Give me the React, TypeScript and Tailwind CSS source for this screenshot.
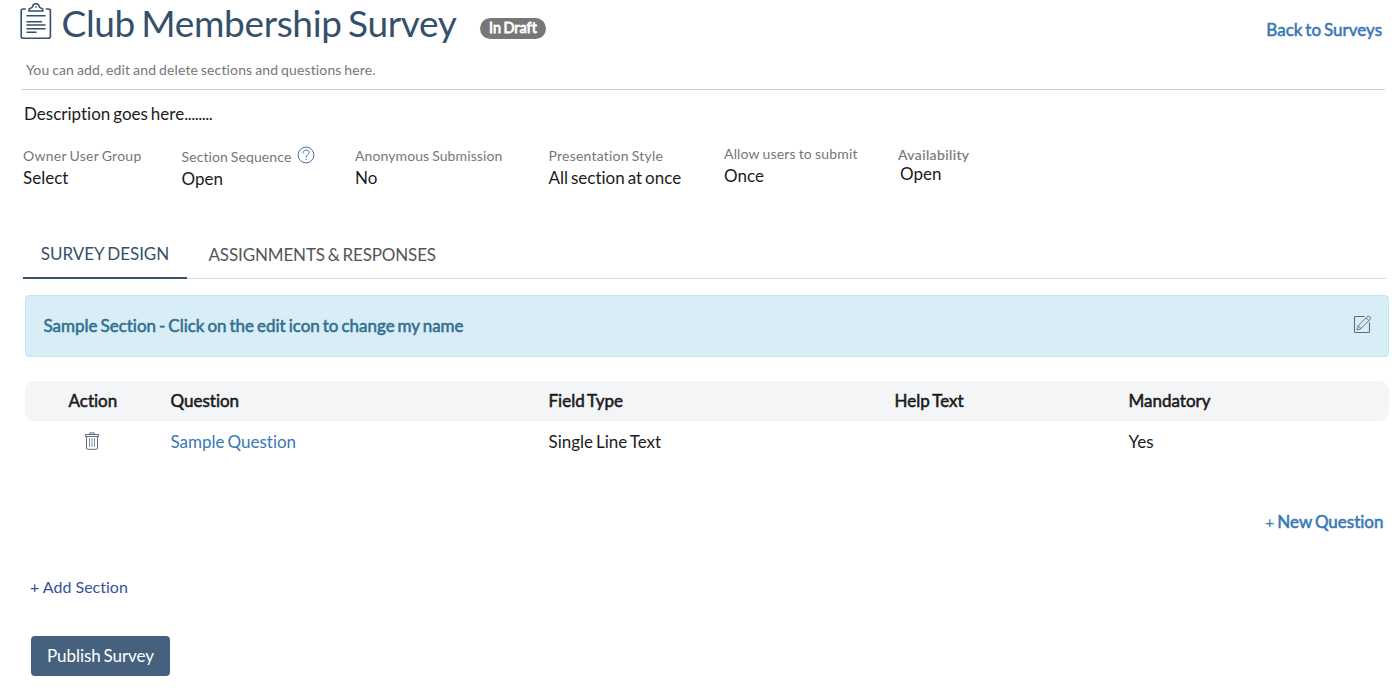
import React from "react";

type FieldProps = {
  label: string;
  value: string;
  className: string;
  labelClass?: string;
  valueClass?: string;
  help?: boolean;
};

function ClipboardIcon() {
  return (
    <svg className="h-[38px] w-8 shrink-0" viewBox="0 0 32 38" fill="none" stroke="#35506b" strokeWidth="1.6" strokeLinecap="round" strokeLinejoin="round">
      <path d="M5.200 7H3.200Q1.200 7 1.200 9v25.200q0 2 2 2h25.200q2 0 2-2V9q0-2-2-2h-2" />
      <path d="M8.900 9V8q0-1.700 2-2 1.500-.3 1.800-1.600Q13.300 1.800 15.900 1.800T19.100 4.400q.3 1.300 1.800 1.600 2 .3 2 2v1z" />
      <path d="M15.600 5h.6" strokeWidth="1.4" />
      <path d="M7 13.700h18M7 19.700h14.500M7 23h18M7 26.700h18M7 30.300h9" strokeWidth="1.5" />
    </svg>
  );
}

function HelpIcon() {
  return (
    <svg className="h-[18px] w-[18px] shrink-0" viewBox="0 0 18 18" fill="none" stroke="#4672ab" strokeWidth="1">
      <circle cx="9" cy="9" r="7.9" />
      <path d="M6 7.200c0-4 6.100-4.200 6.100-.7 0 2.300-3 2.300-3 4.900" strokeLinecap="round" />
      <path d="M8.500 13.500h1.200" strokeWidth="1.2" />
    </svg>
  );
}

function EditIcon() {
  return (
    <svg className="h-[19px] w-[19px] shrink-0" viewBox="0 0 19 19" fill="none" stroke="#596c87" strokeWidth="1.1" strokeLinejoin="round">
      <path d="M11.500 1.500H2.300q-.8 0-.8.8v14.400q0 .8.800.8h13.400q.8 0 .8-.8V7.500" />
      <path d="M4 15l1-4.200 9.200-9.200q1.200-1.100 2.600.2 1.300 1.400.2 2.600l-9 9.200zM5 10.800l3 2.800M13 2.800l3 2.800" strokeWidth="0.95" />
    </svg>
  );
}

function TrashIcon() {
  return (
    <svg className="h-[18px] w-[14px]" viewBox="0 0 14 18" fill="none" stroke="#5d6d83" strokeWidth="1">
      <path d="M.5 4.500v-2h13v2zM4.800 2.500v-1.600h4.400v1.600M1.500 4.500v11.500q0 1.300 1.200 1.300h8.600q1.200 0 1.200-1.300V4.500" />
      <path d="M4.500 6v9M7 6v9M9.500 6v9" stroke="#8295b3" />
    </svg>
  );
}

function Field({ label, value, className, labelClass = "", valueClass = "", help = false }: FieldProps) {
  return (
    <div className={`shrink-0 ${className}`}>
      <div className={`flex h-5 items-center text-[14px] leading-5 text-[#777] [word-spacing:-0.8px] ${labelClass || "tracking-[0.1px]"}`}>
        <span>{label}</span>
        {help && <span className="-mt-1 ml-[5.5px]"><HelpIcon /></span>}
      </div>
      <div className={`text-[17px] text-[#1b1b1b] ${valueClass || "leading-[23px]"}`}>{value}</div>
    </div>
  );
}

const strong = "[-webkit-text-stroke:0.55px_currentColor]";

export default function App() {
  return (
    <main className="h-[688px] w-[1395px] overflow-hidden whitespace-nowrap bg-white font-['Lato',sans-serif] text-[17px] leading-5 text-[#1b1b1b] [font-variant-ligatures:none] [word-spacing:-1.4px]">
      <header className="ml-[22px] mr-[10px] h-[90px] border-b border-[#c9c9c9]">
        <div className="-ml-[2px] -mr-[8px] flex h-[60px] items-start">
          <div className="mt-[2px]"><ClipboardIcon /></div>
          <h1 className="ml-[9.5px] w-[395px] text-[37px] leading-[46px] tracking-[-0.34px] text-[#35506b] [word-spacing:-2.7px]">Club Membership Survey</h1>
          <span className="ml-[23.5px] mt-[18px] flex h-[21px] w-[66px] items-center justify-center rounded-full bg-[#777] pb-px text-[14.5px] text-white [-webkit-text-stroke:0.8px_currentColor]">In Draft</span>
          <a className={`ml-auto mr-[11px] mt-5 text-[#3878b6] ${strong}`}>Back to Surveys</a>
        </div>
        <p className="ml-1 text-[14px] leading-5 tracking-[0.14px] text-[#777] [word-spacing:-0.9px]">You can add, edit and delete sections and questions here.</p>
      </header>

      <p className="ml-6 mt-[14px] h-5">Description goes here<span className="tracking-[-0.5px]">........</span></p>

      <section className="ml-[23px] mt-[22px] flex h-[88px] items-start">
        <Field label="Owner User Group" value="Select" className="w-[158.5px]" labelClass="tracking-[0.25px]" />
        <Field label="Section Sequence" value="Open" className="mt-px w-[173.5px]" help />
        <Field label="Anonymous Submission" value="No" className="w-[193.5px]" />
        <Field label="Presentation Style" value="All section at once" className="w-[175.5px]" labelClass="tracking-[0.22px]" />
        <Field label="Allow users to submit" value="Once" className="-mt-[2px] w-[174px]" labelClass="tracking-[0.18px]" />
        <Field label="Availability" value="Open" className="-mt-px w-[90px]" labelClass="tracking-[0.4px] [-webkit-text-stroke:0.2px_currentColor]" valueClass="ml-[2px] leading-[18px]" />
      </section>

      <nav className="ml-[23px] mr-[9px] flex h-[45px] items-end border-b border-[#dbdbdb] text-[#555]">
        <div className="-mb-px flex h-[46px] w-[164px] justify-center border-b-2 border-[#35506b] pt-[11px] tracking-[-0.05px] text-[#35506b] [word-spacing:-0.8px]">SURVEY DESIGN</div>
        <div className="ml-[21.5px] h-[33px] tracking-[-0.14px]">ASSIGNMENTS &amp; RESPONSES</div>
      </nav>

      <section className="ml-[25px] mr-[6px] mt-4 flex h-[62px] items-center justify-between rounded border border-[#bce8f1] bg-[#d9edf7] pl-[17.5px] pr-4 text-[#31708f]">
        <h2 className={strong}>Sample Section - Click on the edit icon to change my name</h2>
        <div className="-mt-[3px]"><EditIcon /></div>
      </section>

      <section className="ml-[25px] mr-[6px] mt-6">
        <div className={`grid h-10 grid-cols-[145.5px_378px_346px_234px_1fr] items-center rounded-[9px] bg-[#f4f5f7] ${strong}`}>
          <span className="pl-[43.5px]">Action</span>
          <span>Question</span>
          <span>Field Type</span>
          <span>Help Text</span>
          <span>Mandatory</span>
        </div>
        <div className="grid h-[42px] grid-cols-[145.5px_378px_346px_234px_1fr] items-center">
          <span className="-mt-[3px] pl-[60px]"><TrashIcon /></span>
          <a className="text-[#3878b6]">Sample Question</a>
          <span>Single Line Text</span>
          <span />
          <span>Yes</span>
        </div>
      </section>

      <div className="mr-[11.5px] mt-[49px] flex h-5 items-center justify-end text-[#3878b6]">
        <span className="mr-[3px] text-[16px]">+</span>
        <a className={strong}>New Question</a>
      </div>
      <a className="ml-[30px] mt-[45px] block h-5 text-[16px] text-[#34539b] [word-spacing:0px]">+ Add Section</a>
      <button className="ml-[31px] mt-[39px] flex h-10 w-[139px] items-center justify-center rounded bg-[#45617d] tracking-[-0.06px] text-white [word-spacing:-1.4px]">Publish Survey</button>
    </main>
  );
}
